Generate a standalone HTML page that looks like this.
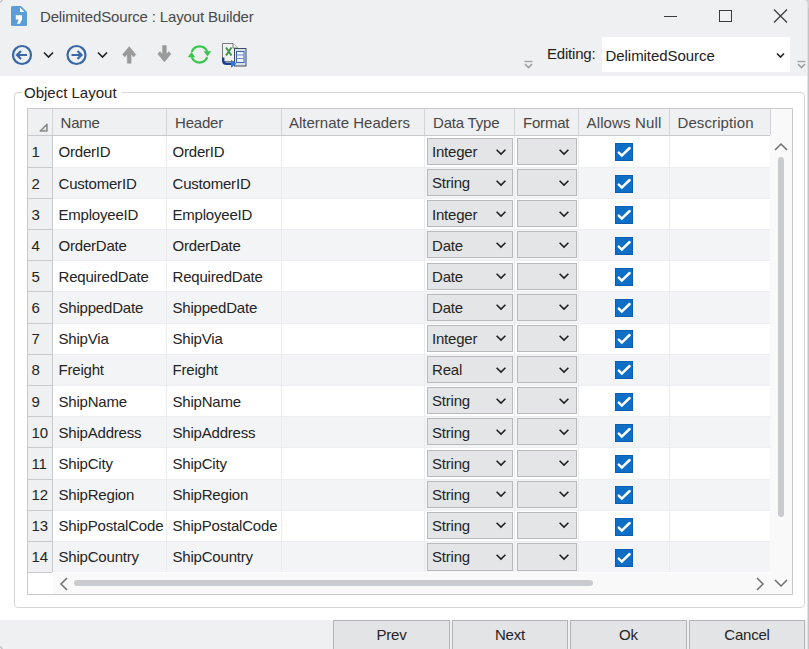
<!DOCTYPE html><html><head><meta charset="utf-8"><style>
*{margin:0;padding:0;box-sizing:border-box}
html,body{width:809px;height:649px;overflow:hidden;background:#fff;font-family:"Liberation Sans",sans-serif;color:#242424}
.a{position:absolute}
.t{position:absolute;white-space:nowrap;font-size:15px;line-height:17px;letter-spacing:-0.2px}
#top{left:0;top:0;width:809px;height:76px;background:#eff0f2}
#bot{left:0;top:620px;width:809px;height:29px;background:#eff0f2}
#redge{left:807px;top:0;width:2px;height:649px;background:linear-gradient(90deg,#e0e1e4 50%,#c2c3c6 50%)}
.grp{left:14px;top:92px;width:791px;height:516px;border:1px solid #d5d5d5;border-radius:4px}
.grid{left:27px;top:108px;width:766px;height:487px;border:1px solid #c8c9cb;background:#fff}
.hdr{background:#eff0f2}
.vl{position:absolute;width:1px;background:#dcdde0}
.hl{position:absolute;height:1px;background:#e6e7ea}
.cb{position:absolute;height:27px;border:1px solid #b9babc;background:#e4e5e7}
.chk{position:absolute;width:18px;height:18px;background:#0f6fc6;border:1px solid #0c5fae}
.btn{position:absolute;top:620px;height:32px;border:1px solid #b3b4b6;background:#e3e4e6;font-size:15px;text-align:center;line-height:27px;letter-spacing:-0.2px}
</style></head><body>
<div class="a" id="top"></div>
<div class="a" id="bot"></div>
<svg class="a" style="left:11px;top:6px" width="16" height="20" viewBox="0 0 16 20">
<path d="M1.5 0H10L16 6V18.5Q16 20 14.5 20H1.5Q0 20 0 18.5V1.5Q0 0 1.5 0Z" fill="#5c9dd7"/>
<path d="M9 1.6V6H13.4Z" fill="#fff"/>
<path d="M4.8 9.2H11V13.6L8.9 17.8H6L7.6 13.6H4.8Z" fill="#fff"/>
</svg>
<div class="t" style="left:40px;top:8px;color:#4a4a4a;letter-spacing:-0.15px">DelimitedSource : Layout Builder</div>
<div class="a" style="left:664px;top:16px;width:13px;height:1px;background:#3a3a3a"></div>
<div class="a" style="left:719px;top:10px;width:13px;height:12px;border:1px solid #3a3a3a"></div>
<svg class="a" style="left:773px;top:9px" width="15" height="14" viewBox="0 0 15 14"><path d="M1 0.5L14 13.5M14 0.5L1 13.5" stroke="#3a3a3a" stroke-width="1.2"/></svg>
<svg class="a" style="left:0;top:35px" width="260" height="40" viewBox="0 35 260 40">
<circle cx="22" cy="55" r="9" fill="none" stroke="#3868a6" stroke-width="2.2"/>
<path d="M17 55H27M21 51L17 55L21 59" fill="none" stroke="#3868a6" stroke-width="2.2"/>
<path d="M44 52.5L48.5 57L53 52.5" fill="none" stroke="#222" stroke-width="1.6"/>
<circle cx="76.5" cy="55" r="9" fill="none" stroke="#3868a6" stroke-width="2.2"/>
<path d="M71.5 55H81.5M77.5 51L81.5 55L77.5 59" fill="none" stroke="#3868a6" stroke-width="2.2"/>
<path d="M98 52.5L102.5 57L107 52.5" fill="none" stroke="#222" stroke-width="1.6"/>
<path d="M129.2 46.6L135.8 54.6L133.6 57L131.1 54.2V63.3H127.3V54.2L124.8 57L122.6 54.6Z" fill="#9a9a9a" stroke="#9a9a9a" stroke-width="0.5" stroke-linejoin="round"/>
<path d="M164.4 61.9L171 53.9L168.8 51.5L166.3 54.3V45.5H162.5V54.3L160 51.5L157.8 53.9Z" fill="#9a9a9a" stroke="#9a9a9a" stroke-width="0.5" stroke-linejoin="round"/>
<path d="M191.8 51.8A8.2 8.2 0 0 1 207.2 51.8" fill="none" stroke="#3cc451" stroke-width="2.3"/>
<path d="M207.2 57.2A8.2 8.2 0 0 1 191.8 57.2" fill="none" stroke="#3cc451" stroke-width="2.3"/>
<path d="M203.7 51.3H211.3L207.5 56.6Z" fill="#3cc451"/>
<path d="M187.7 57.3H195.3L191.5 52Z" fill="#3cc451"/>
<path d="M222.5 43.5H233L237.5 48V61.5H222.5Z" fill="#f2f2f2" stroke="#7a7a7a"/>
<path d="M233 43.5V48H237.5" fill="#fff" stroke="#7a7a7a"/>
<path d="M226 47.5L231.5 55.5M231.5 47.5L226 55.5" stroke="#3a9a48" stroke-width="2"/>
<rect x="234.5" y="48.5" width="11.5" height="17.5" fill="#d6e0ef" stroke="#414a5a"/>
<rect x="236.5" y="51.5" width="7.5" height="11" fill="#eef3fb" stroke="#3d64b8"/>
<path d="M236.5 55H244M236.5 58.5H244" stroke="#6f8fcf" stroke-width="1"/>
<path d="M223.2 57.5V60.5Q223.2 63.8 226.5 63.8H232" fill="none" stroke="#1d3f8f" stroke-width="2.4"/>
<path d="M231 59.8L236.5 63.8L231 67.8Z" fill="#2f7ad8"/>
</svg>
<svg class="a" style="left:524px;top:60px" width="9" height="9" viewBox="0 0 9 9"><path d="M0.5 1.5H8.5" stroke="#a0a0a0" stroke-width="1.3"/><path d="M1 4L4.5 7.5L8 4" fill="none" stroke="#a0a0a0" stroke-width="1.6"/></svg>
<svg class="a" style="left:797px;top:60px" width="9" height="9" viewBox="0 0 9 9"><path d="M0.5 1.5H8.5" stroke="#a0a0a0" stroke-width="1.3"/><path d="M1 4L4.5 7.5L8 4" fill="none" stroke="#a0a0a0" stroke-width="1.6"/></svg>
<div class="t" style="left:547px;top:45px;color:#222">Editing:</div>
<div class="a" style="left:602px;top:37px;width:188px;height:35px;background:#fff"></div>
<div class="t" style="left:605.5px;top:47px;color:#222;letter-spacing:-0.05px">DelimitedSource</div>
<svg class="a" style="left:776px;top:52px" width="9" height="7" viewBox="0 0 9 7"><path d="M1 1.5L4.5 5L8 1.5" fill="none" stroke="#222" stroke-width="1.6"/></svg>
<div class="a grp"></div>
<div class="t" style="left:22px;top:84px;background:#fff;padding:0 5px 0 2px;letter-spacing:0">Object Layout</div>
<div class="a grid"></div>
<div class="a hdr" style="left:28px;top:109px;width:742px;height:26px"></div>
<div class="a hdr" style="left:28px;top:136px;width:24px;height:436px"></div>
<div class="a" style="left:53px;top:168px;width:717px;height:30px;background:#f3f4f6"></div>
<div class="a" style="left:53px;top:230px;width:717px;height:30px;background:#f3f4f6"></div>
<div class="a" style="left:53px;top:292px;width:717px;height:31px;background:#f3f4f6"></div>
<div class="a" style="left:53px;top:355px;width:717px;height:30px;background:#f3f4f6"></div>
<div class="a" style="left:53px;top:417px;width:717px;height:30px;background:#f3f4f6"></div>
<div class="a" style="left:53px;top:480px;width:717px;height:30px;background:#f3f4f6"></div>
<div class="a" style="left:53px;top:542px;width:717px;height:30px;background:#f3f4f6"></div>
<div class="a" style="left:28px;top:135px;width:742px;height:1px;background:#c8c9cc"></div>
<div class="hl" style="left:28px;top:167px;width:24px;background:#c9cacd"></div>
<div class="hl" style="left:28px;top:198px;width:24px;background:#c9cacd"></div>
<div class="hl" style="left:28px;top:229px;width:24px;background:#c9cacd"></div>
<div class="hl" style="left:28px;top:260px;width:24px;background:#c9cacd"></div>
<div class="hl" style="left:28px;top:291px;width:24px;background:#c9cacd"></div>
<div class="hl" style="left:28px;top:323px;width:24px;background:#c9cacd"></div>
<div class="hl" style="left:28px;top:354px;width:24px;background:#c9cacd"></div>
<div class="hl" style="left:28px;top:385px;width:24px;background:#c9cacd"></div>
<div class="hl" style="left:28px;top:416px;width:24px;background:#c9cacd"></div>
<div class="hl" style="left:28px;top:447px;width:24px;background:#c9cacd"></div>
<div class="hl" style="left:28px;top:479px;width:24px;background:#c9cacd"></div>
<div class="hl" style="left:28px;top:510px;width:24px;background:#c9cacd"></div>
<div class="hl" style="left:28px;top:541px;width:24px;background:#c9cacd"></div>
<div class="hl" style="left:28px;top:572px;width:24px;background:#c9cacd"></div>
<div class="hl" style="left:53px;top:167px;width:717px;background:#edeef0"></div>
<div class="hl" style="left:53px;top:198px;width:717px;background:#edeef0"></div>
<div class="hl" style="left:53px;top:229px;width:717px;background:#edeef0"></div>
<div class="hl" style="left:53px;top:260px;width:717px;background:#edeef0"></div>
<div class="hl" style="left:53px;top:291px;width:717px;background:#edeef0"></div>
<div class="hl" style="left:53px;top:323px;width:717px;background:#edeef0"></div>
<div class="hl" style="left:53px;top:354px;width:717px;background:#edeef0"></div>
<div class="hl" style="left:53px;top:385px;width:717px;background:#edeef0"></div>
<div class="hl" style="left:53px;top:416px;width:717px;background:#edeef0"></div>
<div class="hl" style="left:53px;top:447px;width:717px;background:#edeef0"></div>
<div class="hl" style="left:53px;top:479px;width:717px;background:#edeef0"></div>
<div class="hl" style="left:53px;top:510px;width:717px;background:#edeef0"></div>
<div class="hl" style="left:53px;top:541px;width:717px;background:#edeef0"></div>
<div class="vl" style="left:52px;top:109px;height:26px;background:#d3d4d7"></div>
<div class="vl" style="left:166px;top:109px;height:26px;background:#d3d4d7"></div>
<div class="vl" style="left:281px;top:109px;height:26px;background:#d3d4d7"></div>
<div class="vl" style="left:424px;top:109px;height:26px;background:#d3d4d7"></div>
<div class="vl" style="left:514px;top:109px;height:26px;background:#d3d4d7"></div>
<div class="vl" style="left:578px;top:109px;height:26px;background:#d3d4d7"></div>
<div class="vl" style="left:669px;top:109px;height:26px;background:#d3d4d7"></div>
<div class="vl" style="left:770px;top:109px;height:26px;background:#d3d4d7"></div>
<div class="vl" style="left:52px;top:136px;height:436px;background:#c9cacd"></div>
<div class="vl" style="left:166px;top:136px;height:436px;background:#ebecee"></div>
<div class="vl" style="left:281px;top:136px;height:436px;background:#ebecee"></div>
<div class="vl" style="left:424px;top:136px;height:436px;background:#ebecee"></div>
<div class="vl" style="left:514px;top:136px;height:436px;background:#ebecee"></div>
<div class="vl" style="left:578px;top:136px;height:436px;background:#ebecee"></div>
<div class="vl" style="left:669px;top:136px;height:436px;background:#ebecee"></div>
<div class="vl" style="left:770px;top:136px;height:436px;background:#ebecee"></div>
<svg class="a" style="left:39px;top:123px" width="9" height="9" viewBox="0 0 9 9"><path d="M8 1.2V8H1.2Z" fill="#e2e2e2" stroke="#8a8a8a" stroke-width="1.5" stroke-linejoin="round"/></svg>
<div class="t" style="left:60.5px;top:114px;color:#474747;letter-spacing:-0.2px">Name</div>
<div class="t" style="left:175px;top:114px;color:#474747;letter-spacing:-0.2px">Header</div>
<div class="t" style="left:289px;top:114px;color:#474747;letter-spacing:0px">Alternate Headers</div>
<div class="t" style="left:433px;top:114px;color:#474747;letter-spacing:-0.2px">Data Type</div>
<div class="t" style="left:523px;top:114px;color:#474747;letter-spacing:-0.2px">Format</div>
<div class="t" style="left:586.5px;top:114px;color:#474747;letter-spacing:0.15px">Allows Null</div>
<div class="t" style="left:677.5px;top:114px;color:#474747;letter-spacing:0.1px">Description</div>
<div class="t" style="left:31.5px;top:143px">1</div>
<div class="t" style="left:58.5px;top:143px">OrderID</div>
<div class="t" style="left:172.5px;top:143px">OrderID</div>
<div class="cb" style="left:427px;top:138px;width:86px;height:27px"></div>
<div class="t" style="left:432px;top:143px">Integer</div>
<svg class="a" style="left:495px;top:148px" width="12" height="8" viewBox="0 0 12 8"><path d="M1.6 1.7L6 6.1L10.4 1.7" fill="none" stroke="#1e1e1e" stroke-width="1.55"/></svg>
<div class="cb" style="left:517px;top:138px;width:60px;height:27px"></div>
<svg class="a" style="left:558px;top:148px" width="12" height="8" viewBox="0 0 12 8"><path d="M1.6 1.7L6 6.1L10.4 1.7" fill="none" stroke="#1e1e1e" stroke-width="1.55"/></svg>
<div class="chk" style="left:615px;top:143px"></div>
<svg class="a" style="left:615px;top:143px" width="18" height="18" viewBox="0 0 18 18"><path d="M3.8 9.6L6.8 12.6L14.6 5" fill="none" stroke="#fff" stroke-width="2.5" stroke-linecap="round"/></svg>
<div class="t" style="left:31.5px;top:175px">2</div>
<div class="t" style="left:58.5px;top:175px">CustomerID</div>
<div class="t" style="left:172.5px;top:175px">CustomerID</div>
<div class="cb" style="left:427px;top:169px;width:86px;height:27px"></div>
<div class="t" style="left:432px;top:174px">String</div>
<svg class="a" style="left:495px;top:179px" width="12" height="8" viewBox="0 0 12 8"><path d="M1.6 1.7L6 6.1L10.4 1.7" fill="none" stroke="#1e1e1e" stroke-width="1.55"/></svg>
<div class="cb" style="left:517px;top:169px;width:60px;height:27px"></div>
<svg class="a" style="left:558px;top:179px" width="12" height="8" viewBox="0 0 12 8"><path d="M1.6 1.7L6 6.1L10.4 1.7" fill="none" stroke="#1e1e1e" stroke-width="1.55"/></svg>
<div class="chk" style="left:615px;top:175px"></div>
<svg class="a" style="left:615px;top:175px" width="18" height="18" viewBox="0 0 18 18"><path d="M3.8 9.6L6.8 12.6L14.6 5" fill="none" stroke="#fff" stroke-width="2.5" stroke-linecap="round"/></svg>
<div class="t" style="left:31.5px;top:206px">3</div>
<div class="t" style="left:58.5px;top:206px">EmployeeID</div>
<div class="t" style="left:172.5px;top:206px">EmployeeID</div>
<div class="cb" style="left:427px;top:200px;width:86px;height:27px"></div>
<div class="t" style="left:432px;top:206px">Integer</div>
<svg class="a" style="left:495px;top:210px" width="12" height="8" viewBox="0 0 12 8"><path d="M1.6 1.7L6 6.1L10.4 1.7" fill="none" stroke="#1e1e1e" stroke-width="1.55"/></svg>
<div class="cb" style="left:517px;top:200px;width:60px;height:27px"></div>
<svg class="a" style="left:558px;top:210px" width="12" height="8" viewBox="0 0 12 8"><path d="M1.6 1.7L6 6.1L10.4 1.7" fill="none" stroke="#1e1e1e" stroke-width="1.55"/></svg>
<div class="chk" style="left:615px;top:206px"></div>
<svg class="a" style="left:615px;top:206px" width="18" height="18" viewBox="0 0 18 18"><path d="M3.8 9.6L6.8 12.6L14.6 5" fill="none" stroke="#fff" stroke-width="2.5" stroke-linecap="round"/></svg>
<div class="t" style="left:31.5px;top:237px">4</div>
<div class="t" style="left:58.5px;top:237px">OrderDate</div>
<div class="t" style="left:172.5px;top:237px">OrderDate</div>
<div class="cb" style="left:427px;top:231px;width:86px;height:27px"></div>
<div class="t" style="left:432px;top:237px">Date</div>
<svg class="a" style="left:495px;top:241px" width="12" height="8" viewBox="0 0 12 8"><path d="M1.6 1.7L6 6.1L10.4 1.7" fill="none" stroke="#1e1e1e" stroke-width="1.55"/></svg>
<div class="cb" style="left:517px;top:231px;width:60px;height:27px"></div>
<svg class="a" style="left:558px;top:241px" width="12" height="8" viewBox="0 0 12 8"><path d="M1.6 1.7L6 6.1L10.4 1.7" fill="none" stroke="#1e1e1e" stroke-width="1.55"/></svg>
<div class="chk" style="left:615px;top:237px"></div>
<svg class="a" style="left:615px;top:237px" width="18" height="18" viewBox="0 0 18 18"><path d="M3.8 9.6L6.8 12.6L14.6 5" fill="none" stroke="#fff" stroke-width="2.5" stroke-linecap="round"/></svg>
<div class="t" style="left:31.5px;top:268px">5</div>
<div class="t" style="left:58.5px;top:268px">RequiredDate</div>
<div class="t" style="left:172.5px;top:268px">RequiredDate</div>
<div class="cb" style="left:427px;top:263px;width:86px;height:27px"></div>
<div class="t" style="left:432px;top:268px">Date</div>
<svg class="a" style="left:495px;top:272px" width="12" height="8" viewBox="0 0 12 8"><path d="M1.6 1.7L6 6.1L10.4 1.7" fill="none" stroke="#1e1e1e" stroke-width="1.55"/></svg>
<div class="cb" style="left:517px;top:263px;width:60px;height:27px"></div>
<svg class="a" style="left:558px;top:272px" width="12" height="8" viewBox="0 0 12 8"><path d="M1.6 1.7L6 6.1L10.4 1.7" fill="none" stroke="#1e1e1e" stroke-width="1.55"/></svg>
<div class="chk" style="left:615px;top:268px"></div>
<svg class="a" style="left:615px;top:268px" width="18" height="18" viewBox="0 0 18 18"><path d="M3.8 9.6L6.8 12.6L14.6 5" fill="none" stroke="#fff" stroke-width="2.5" stroke-linecap="round"/></svg>
<div class="t" style="left:31.5px;top:299px">6</div>
<div class="t" style="left:58.5px;top:299px">ShippedDate</div>
<div class="t" style="left:172.5px;top:299px">ShippedDate</div>
<div class="cb" style="left:427px;top:294px;width:86px;height:27px"></div>
<div class="t" style="left:432px;top:299px">Date</div>
<svg class="a" style="left:495px;top:303px" width="12" height="8" viewBox="0 0 12 8"><path d="M1.6 1.7L6 6.1L10.4 1.7" fill="none" stroke="#1e1e1e" stroke-width="1.55"/></svg>
<div class="cb" style="left:517px;top:294px;width:60px;height:27px"></div>
<svg class="a" style="left:558px;top:303px" width="12" height="8" viewBox="0 0 12 8"><path d="M1.6 1.7L6 6.1L10.4 1.7" fill="none" stroke="#1e1e1e" stroke-width="1.55"/></svg>
<div class="chk" style="left:615px;top:299px"></div>
<svg class="a" style="left:615px;top:299px" width="18" height="18" viewBox="0 0 18 18"><path d="M3.8 9.6L6.8 12.6L14.6 5" fill="none" stroke="#fff" stroke-width="2.5" stroke-linecap="round"/></svg>
<div class="t" style="left:31.5px;top:330px">7</div>
<div class="t" style="left:58.5px;top:330px">ShipVia</div>
<div class="t" style="left:172.5px;top:330px">ShipVia</div>
<div class="cb" style="left:427px;top:325px;width:86px;height:27px"></div>
<div class="t" style="left:432px;top:330px">Integer</div>
<svg class="a" style="left:495px;top:334px" width="12" height="8" viewBox="0 0 12 8"><path d="M1.6 1.7L6 6.1L10.4 1.7" fill="none" stroke="#1e1e1e" stroke-width="1.55"/></svg>
<div class="cb" style="left:517px;top:325px;width:60px;height:27px"></div>
<svg class="a" style="left:558px;top:334px" width="12" height="8" viewBox="0 0 12 8"><path d="M1.6 1.7L6 6.1L10.4 1.7" fill="none" stroke="#1e1e1e" stroke-width="1.55"/></svg>
<div class="chk" style="left:615px;top:330px"></div>
<svg class="a" style="left:615px;top:330px" width="18" height="18" viewBox="0 0 18 18"><path d="M3.8 9.6L6.8 12.6L14.6 5" fill="none" stroke="#fff" stroke-width="2.5" stroke-linecap="round"/></svg>
<div class="t" style="left:31.5px;top:361px">8</div>
<div class="t" style="left:58.5px;top:361px">Freight</div>
<div class="t" style="left:172.5px;top:361px">Freight</div>
<div class="cb" style="left:427px;top:356px;width:86px;height:27px"></div>
<div class="t" style="left:432px;top:361px">Real</div>
<svg class="a" style="left:495px;top:366px" width="12" height="8" viewBox="0 0 12 8"><path d="M1.6 1.7L6 6.1L10.4 1.7" fill="none" stroke="#1e1e1e" stroke-width="1.55"/></svg>
<div class="cb" style="left:517px;top:356px;width:60px;height:27px"></div>
<svg class="a" style="left:558px;top:366px" width="12" height="8" viewBox="0 0 12 8"><path d="M1.6 1.7L6 6.1L10.4 1.7" fill="none" stroke="#1e1e1e" stroke-width="1.55"/></svg>
<div class="chk" style="left:615px;top:361px"></div>
<svg class="a" style="left:615px;top:361px" width="18" height="18" viewBox="0 0 18 18"><path d="M3.8 9.6L6.8 12.6L14.6 5" fill="none" stroke="#fff" stroke-width="2.5" stroke-linecap="round"/></svg>
<div class="t" style="left:31.5px;top:393px">9</div>
<div class="t" style="left:58.5px;top:393px">ShipName</div>
<div class="t" style="left:172.5px;top:393px">ShipName</div>
<div class="cb" style="left:427px;top:387px;width:86px;height:27px"></div>
<div class="t" style="left:432px;top:392px">String</div>
<svg class="a" style="left:495px;top:397px" width="12" height="8" viewBox="0 0 12 8"><path d="M1.6 1.7L6 6.1L10.4 1.7" fill="none" stroke="#1e1e1e" stroke-width="1.55"/></svg>
<div class="cb" style="left:517px;top:387px;width:60px;height:27px"></div>
<svg class="a" style="left:558px;top:397px" width="12" height="8" viewBox="0 0 12 8"><path d="M1.6 1.7L6 6.1L10.4 1.7" fill="none" stroke="#1e1e1e" stroke-width="1.55"/></svg>
<div class="chk" style="left:615px;top:393px"></div>
<svg class="a" style="left:615px;top:393px" width="18" height="18" viewBox="0 0 18 18"><path d="M3.8 9.6L6.8 12.6L14.6 5" fill="none" stroke="#fff" stroke-width="2.5" stroke-linecap="round"/></svg>
<div class="t" style="left:31.5px;top:424px">10</div>
<div class="t" style="left:58.5px;top:424px">ShipAddress</div>
<div class="t" style="left:172.5px;top:424px">ShipAddress</div>
<div class="cb" style="left:427px;top:418px;width:86px;height:27px"></div>
<div class="t" style="left:432px;top:424px">String</div>
<svg class="a" style="left:495px;top:428px" width="12" height="8" viewBox="0 0 12 8"><path d="M1.6 1.7L6 6.1L10.4 1.7" fill="none" stroke="#1e1e1e" stroke-width="1.55"/></svg>
<div class="cb" style="left:517px;top:418px;width:60px;height:27px"></div>
<svg class="a" style="left:558px;top:428px" width="12" height="8" viewBox="0 0 12 8"><path d="M1.6 1.7L6 6.1L10.4 1.7" fill="none" stroke="#1e1e1e" stroke-width="1.55"/></svg>
<div class="chk" style="left:615px;top:424px"></div>
<svg class="a" style="left:615px;top:424px" width="18" height="18" viewBox="0 0 18 18"><path d="M3.8 9.6L6.8 12.6L14.6 5" fill="none" stroke="#fff" stroke-width="2.5" stroke-linecap="round"/></svg>
<div class="t" style="left:31.5px;top:455px">11</div>
<div class="t" style="left:58.5px;top:455px">ShipCity</div>
<div class="t" style="left:172.5px;top:455px">ShipCity</div>
<div class="cb" style="left:427px;top:450px;width:86px;height:27px"></div>
<div class="t" style="left:432px;top:455px">String</div>
<svg class="a" style="left:495px;top:459px" width="12" height="8" viewBox="0 0 12 8"><path d="M1.6 1.7L6 6.1L10.4 1.7" fill="none" stroke="#1e1e1e" stroke-width="1.55"/></svg>
<div class="cb" style="left:517px;top:450px;width:60px;height:27px"></div>
<svg class="a" style="left:558px;top:459px" width="12" height="8" viewBox="0 0 12 8"><path d="M1.6 1.7L6 6.1L10.4 1.7" fill="none" stroke="#1e1e1e" stroke-width="1.55"/></svg>
<div class="chk" style="left:615px;top:455px"></div>
<svg class="a" style="left:615px;top:455px" width="18" height="18" viewBox="0 0 18 18"><path d="M3.8 9.6L6.8 12.6L14.6 5" fill="none" stroke="#fff" stroke-width="2.5" stroke-linecap="round"/></svg>
<div class="t" style="left:31.5px;top:486px">12</div>
<div class="t" style="left:58.5px;top:486px">ShipRegion</div>
<div class="t" style="left:172.5px;top:486px">ShipRegion</div>
<div class="cb" style="left:427px;top:481px;width:86px;height:27px"></div>
<div class="t" style="left:432px;top:486px">String</div>
<svg class="a" style="left:495px;top:490px" width="12" height="8" viewBox="0 0 12 8"><path d="M1.6 1.7L6 6.1L10.4 1.7" fill="none" stroke="#1e1e1e" stroke-width="1.55"/></svg>
<div class="cb" style="left:517px;top:481px;width:60px;height:27px"></div>
<svg class="a" style="left:558px;top:490px" width="12" height="8" viewBox="0 0 12 8"><path d="M1.6 1.7L6 6.1L10.4 1.7" fill="none" stroke="#1e1e1e" stroke-width="1.55"/></svg>
<div class="chk" style="left:615px;top:486px"></div>
<svg class="a" style="left:615px;top:486px" width="18" height="18" viewBox="0 0 18 18"><path d="M3.8 9.6L6.8 12.6L14.6 5" fill="none" stroke="#fff" stroke-width="2.5" stroke-linecap="round"/></svg>
<div class="t" style="left:31.5px;top:517px">13</div>
<div class="t" style="left:58.5px;top:517px">ShipPostalCode</div>
<div class="t" style="left:172.5px;top:517px">ShipPostalCode</div>
<div class="cb" style="left:427px;top:512px;width:86px;height:27px"></div>
<div class="t" style="left:432px;top:517px">String</div>
<svg class="a" style="left:495px;top:521px" width="12" height="8" viewBox="0 0 12 8"><path d="M1.6 1.7L6 6.1L10.4 1.7" fill="none" stroke="#1e1e1e" stroke-width="1.55"/></svg>
<div class="cb" style="left:517px;top:512px;width:60px;height:27px"></div>
<svg class="a" style="left:558px;top:521px" width="12" height="8" viewBox="0 0 12 8"><path d="M1.6 1.7L6 6.1L10.4 1.7" fill="none" stroke="#1e1e1e" stroke-width="1.55"/></svg>
<div class="chk" style="left:615px;top:518px"></div>
<svg class="a" style="left:615px;top:518px" width="18" height="18" viewBox="0 0 18 18"><path d="M3.8 9.6L6.8 12.6L14.6 5" fill="none" stroke="#fff" stroke-width="2.5" stroke-linecap="round"/></svg>
<div class="t" style="left:31.5px;top:548px">14</div>
<div class="t" style="left:58.5px;top:548px">ShipCountry</div>
<div class="t" style="left:172.5px;top:548px">ShipCountry</div>
<div class="cb" style="left:427px;top:543px;width:86px;height:28px"></div>
<div class="t" style="left:432px;top:548px">String</div>
<svg class="a" style="left:495px;top:553px" width="12" height="8" viewBox="0 0 12 8"><path d="M1.6 1.7L6 6.1L10.4 1.7" fill="none" stroke="#1e1e1e" stroke-width="1.55"/></svg>
<div class="cb" style="left:517px;top:543px;width:60px;height:28px"></div>
<svg class="a" style="left:558px;top:553px" width="12" height="8" viewBox="0 0 12 8"><path d="M1.6 1.7L6 6.1L10.4 1.7" fill="none" stroke="#1e1e1e" stroke-width="1.55"/></svg>
<div class="chk" style="left:615px;top:549px"></div>
<svg class="a" style="left:615px;top:549px" width="18" height="18" viewBox="0 0 18 18"><path d="M3.8 9.6L6.8 12.6L14.6 5" fill="none" stroke="#fff" stroke-width="2.5" stroke-linecap="round"/></svg>
<div class="a" style="left:771px;top:109px;width:21px;height:27px;background:#f9f9f9"></div><div class="a" style="left:770px;top:136px;width:22px;height:458px;background:#f9f9f9"></div>
<svg class="a" style="left:774px;top:142px" width="14" height="10" viewBox="0 0 14 10"><path d="M1 8L7 2L13 8" fill="none" stroke="#6e6e6e" stroke-width="1.5"/></svg>
<div class="a" style="left:778px;top:157px;width:6px;height:360px;border-radius:3px;background:#cacbce"></div>
<div class="a" style="left:53px;top:573px;width:739px;height:21px;background:#f9f9f9"></div>
<svg class="a" style="left:59px;top:577px" width="10" height="14" viewBox="0 0 10 14"><path d="M8 1L2 7L8 13" fill="none" stroke="#6e6e6e" stroke-width="1.5"/></svg>
<div class="a" style="left:74px;top:580px;width:519px;height:6px;border-radius:3px;background:#cacbce"></div>
<svg class="a" style="left:755px;top:577px" width="10" height="14" viewBox="0 0 10 14"><path d="M2 1L8 7L2 13" fill="none" stroke="#6e6e6e" stroke-width="1.5"/></svg>
<svg class="a" style="left:774px;top:578px" width="14" height="10" viewBox="0 0 14 10"><path d="M1 2L7 8L13 2" fill="none" stroke="#6e6e6e" stroke-width="1.5"/></svg>
<div class="btn" style="left:333px;width:117px">Prev</div>
<div class="btn" style="left:452px;width:116px">Next</div>
<div class="btn" style="left:570px;width:117px">Ok</div>
<div class="btn" style="left:689px;width:116px">Cancel</div>
<div class="a" id="redge"></div>
<svg class="a" style="left:0;top:0" width="4" height="4" viewBox="0 0 4 4"><path d="M0.5 2.5Q0.8 0.8 2.5 0.5" fill="none" stroke="#b8b8b8" stroke-width="1.2"/></svg>
<svg class="a" style="left:0;top:645px" width="4" height="4" viewBox="0 0 4 4"><path d="M0.5 1.5Q0.8 3.2 2.5 3.5" fill="none" stroke="#b0b2b6" stroke-width="1.2"/></svg>
<svg class="a" style="left:801px;top:0" width="8" height="8" viewBox="0 0 8 8"><path d="M4 0Q7 1 7 5V8H9V0Z" fill="#d0d1d4"/></svg>
</body></html>
